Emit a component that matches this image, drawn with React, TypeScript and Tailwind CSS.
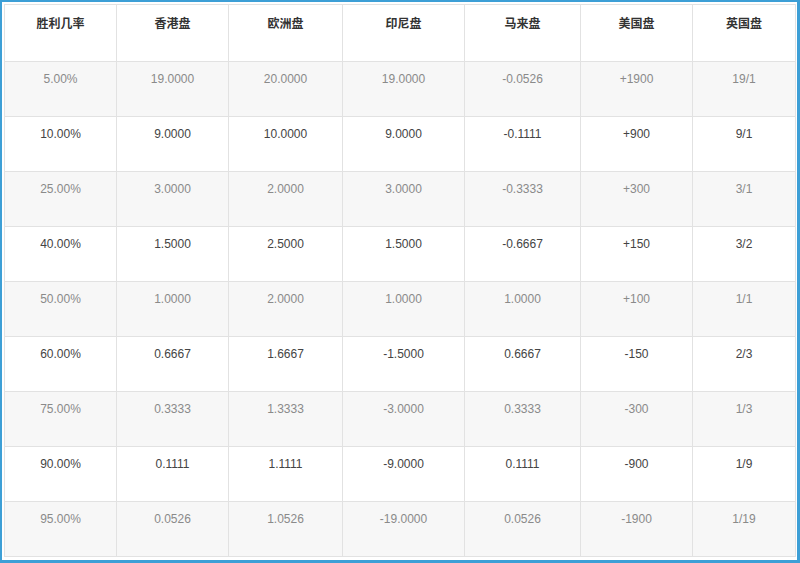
const headers = ["胜利几率", "香港盘", "欧洲盘", "印尼盘", "马来盘", "美国盘", "英国盘"];

const widths = ["w-[112px]", "w-[112px]", "w-[114px]", "w-[122px]", "w-[116px]", "w-[112px]", "w-[103px]"];

const rows: string[][] = [
  ["5.00%", "19.0000", "20.0000", "19.0000", "-0.0526", "+1900", "19/1"],
  ["10.00%", "9.0000", "10.0000", "9.0000", "-0.1111", "+900", "9/1"],
  ["25.00%", "3.0000", "2.0000", "3.0000", "-0.3333", "+300", "3/1"],
  ["40.00%", "1.5000", "2.5000", "1.5000", "-0.6667", "+150", "3/2"],
  ["50.00%", "1.0000", "2.0000", "1.0000", "1.0000", "+100", "1/1"],
  ["60.00%", "0.6667", "1.6667", "-1.5000", "0.6667", "-150", "2/3"],
  ["75.00%", "0.3333", "1.3333", "-3.0000", "0.3333", "-300", "1/3"],
  ["90.00%", "0.1111", "1.1111", "-9.0000", "0.1111", "-900", "1/9"],
  ["95.00%", "0.0526", "1.0526", "-19.0000", "0.0526", "-1900", "1/19"],
];

export default function App() {
  return (
    <div className="w-[800px] h-[563px] bg-white border-[#3d9fd6] border-l-2 border-t-2 border-r-[3px] border-b-[3px] pl-[2px] pt-[2px] font-['Liberation_Sans','Noto_Sans_CJK_SC',sans-serif]">
      <table className="table-fixed border-collapse w-[791px] text-[12px] leading-5">
        <thead>
          <tr className="h-[57px]">
            {headers.map((h, i) => (
              <th
                key={h}
                className={`${widths[i]} border border-[#e2e2e2] align-top pt-[9px] text-center font-bold text-[#333]`}
              >
                {h}
              </th>
            ))}
          </tr>
        </thead>
        <tbody>
          {rows.map((r, ri) => (
            <tr key={ri} className={ri % 2 === 0 ? "h-[55px] bg-[#f7f7f7] text-[#8a8a8a]" : "h-[55px] bg-white text-[#444]"}>
              {r.map((c, ci) => (
                <td key={ci} className="border border-[#e2e2e2] align-top pt-[7px] text-center">
                  {c}
                </td>
              ))}
            </tr>
          ))}
        </tbody>
      </table>
    </div>
  );
}
